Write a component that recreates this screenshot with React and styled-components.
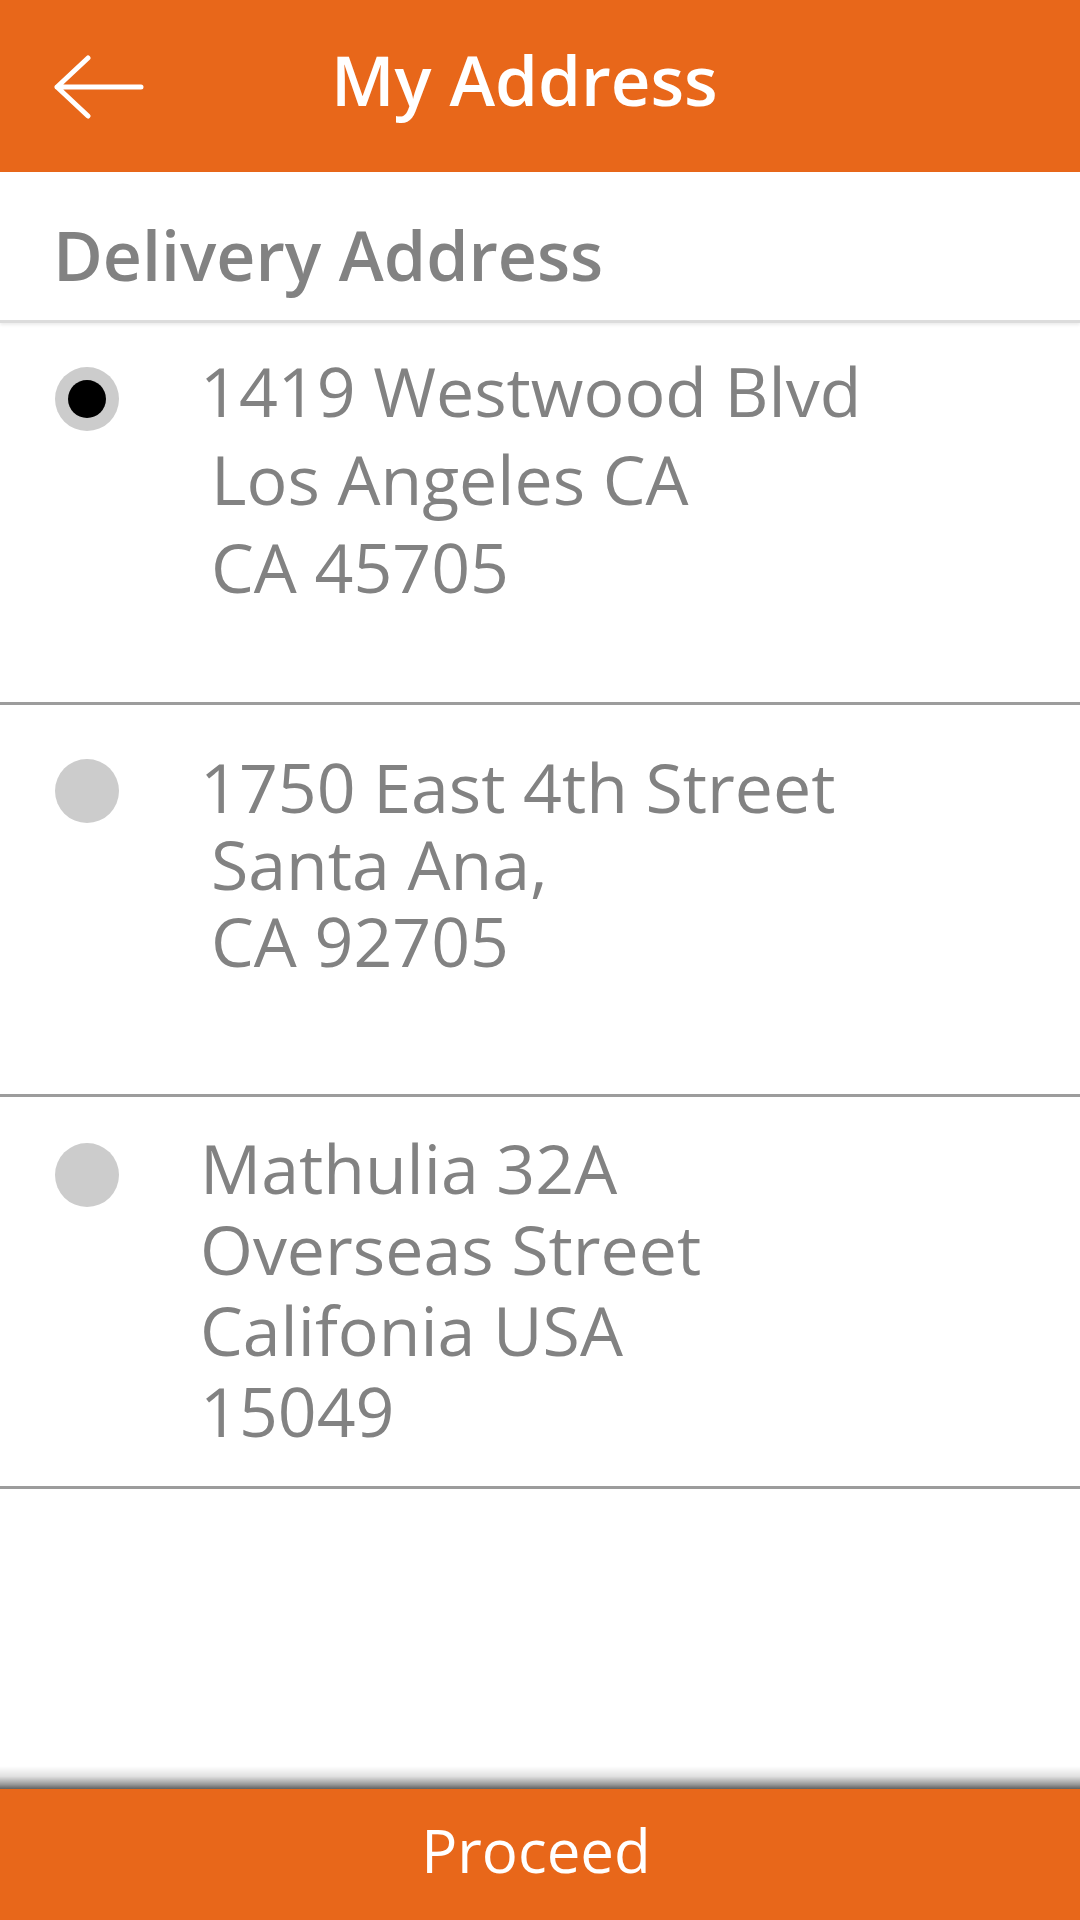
import React from "react";
import styled, { createGlobalStyle } from "styled-components";

const orange = "#e8671a";
const grey = "#828282";

const addresses = [
  {
    id: 1,
    selected: true,
    lines: [
      { text: "1419 Westwood Blvd" },
      { text: "Los Angeles CA", indent: true },
      { text: "CA 45705", indent: true },
    ],
    pad: 24,
    lh: 88,
    dot: 20,
    height: 382,
  },
  {
    id: 2,
    lines: [
      { text: "1750 East 4th Street" },
      { text: "Santa Ana,", indent: true },
      { text: "CA 92705", indent: true },
    ],
    pad: 43,
    lh: 77,
    dot: 11,
    height: 392,
  },
  {
    id: 3,
    lines: [
      { text: "Mathulia 32A" },
      { text: "Overseas Street" },
      { text: "Califonia USA" },
      { text: "15049" },
    ],
    pad: 30,
    lh: 81,
    dot: 16,
    height: 392,
  },
];

export default function App() {
  return (
    <Page>
      <GlobalStyle />
      <Header>
        <BackButton aria-label="Back">
          <svg width="90" height="64" viewBox="0 0 90 64" fill="none">
            <path
              d="M3 32H87M34 3L3 32L34 61"
              stroke="#fff"
              strokeWidth="5"
              strokeLinecap="round"
              strokeLinejoin="round"
            />
          </svg>
        </BackButton>
        <Title>My Address</Title>
      </Header>

      <SectionHead>Delivery Address</SectionHead>

      <List>
        {addresses.map((a) => (
          <Row key={a.id} pad={a.pad} height={a.height}>
            <Radio offset={a.dot}>{a.selected && <Dot />}</Radio>
            <AddressText lh={a.lh}>
              {a.lines.map((l, i) => (
                <Line key={i} indent={l.indent}>
                  {l.text}
                </Line>
              ))}
            </AddressText>
          </Row>
        ))}
      </List>

      <Spacer />

      <Footer>
        <Shade />
        <ProceedButton>Proceed</ProceedButton>
      </Footer>
    </Page>
  );
}

const GlobalStyle = createGlobalStyle`
  html, body {
    margin: 0;
    padding: 0;
    background: #fff;
  }
  body {
    font-family: "Open Sans", "Liberation Sans", sans-serif;
  }
`;

const Page = styled.div`
  width: 1080px;
  height: 1920px;
  display: flex;
  flex-direction: column;
  overflow: hidden;
`;

const Header = styled.header`
  height: 172px;
  flex-shrink: 0;
  background: ${orange};
  display: flex;
  align-items: flex-start;
  padding-left: 54px;
  box-sizing: border-box;
`;

const BackButton = styled.div`
  margin-top: 55px;
  width: 90px;
  height: 64px;
  display: flex;
`;

const Title = styled.h1`
  margin: 45px 0 0 187px;
  font-size: 69px;
  line-height: 68px;
  font-weight: 600;
  color: #fff;
`;

const SectionHead = styled.div`
  height: 151px;
  flex-shrink: 0;
  box-sizing: border-box;
  padding: 49px 0 0 53px;
  font-size: 68px;
  line-height: 68px;
  font-weight: 600;
  color: ${grey};
  border-bottom: 3px solid #dcdcdc;
  box-shadow: 0 2px 3px rgba(0, 0, 0, 0.08);
`;

const List = styled.div`
  display: flex;
  flex-direction: column;
`;

const Row = styled.div`
  height: ${(p) => p.height}px;
  box-sizing: border-box;
  display: flex;
  align-items: flex-start;
  padding: ${(p) => p.pad}px 0 0 55px;
  border-bottom: 3px solid #9c9c9c;
`;

const Radio = styled.div`
  width: 64px;
  height: 64px;
  flex-shrink: 0;
  margin-top: ${(p) => p.offset}px;
  border-radius: 50%;
  background: #cccccc;
  display: flex;
  align-items: center;
  justify-content: center;
`;

const Dot = styled.div`
  width: 38px;
  height: 38px;
  border-radius: 50%;
  background: #000;
`;

const AddressText = styled.div`
  margin-left: 81px;
  display: flex;
  flex-direction: column;
  font-size: 68px;
  line-height: ${(p) => p.lh}px;
  color: ${grey};
`;

const Line = styled.div`
  padding-left: ${(p) => (p.indent ? 11 : 0)}px;
  white-space: nowrap;
`;

const Spacer = styled.div`
  flex: 1;
`;

const Footer = styled.footer`
  flex-shrink: 0;
  display: flex;
  flex-direction: column;
`;

const Shade = styled.div`
  height: 23px;
  background: linear-gradient(
    to bottom,
    rgba(0, 0, 0, 0) 0%,
    rgba(0, 0, 0, 0.12) 45%,
    rgba(0, 0, 0, 0.4) 80%,
    rgba(0, 0, 0, 0.62) 100%
  );
`;

const ProceedButton = styled.div`
  height: 131px;
  background: ${orange};
  display: flex;
  align-items: center;
  justify-content: center;
  padding: 0 8px 10px 0;
  box-sizing: border-box;
  font-size: 60px;
  line-height: 60px;
  color: #fff;
`;
